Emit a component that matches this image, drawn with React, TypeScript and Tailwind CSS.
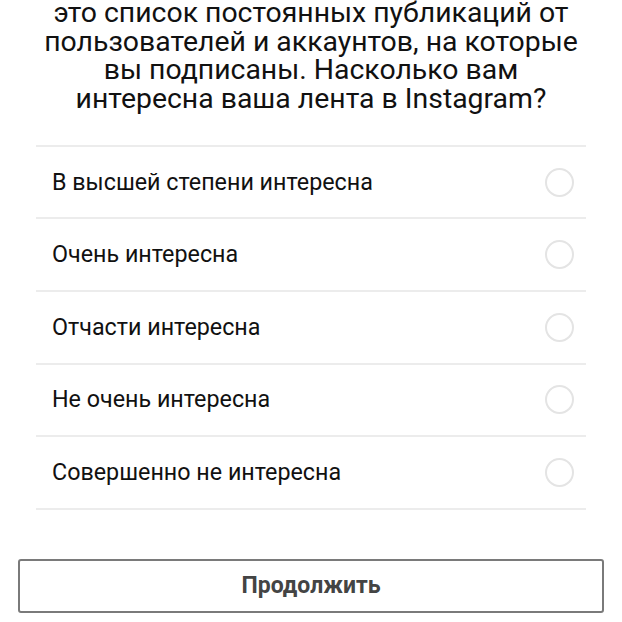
import React from 'react';

const options = [
  'В высшей степени интересна',
  'Очень интересна',
  'Отчасти интересна',
  'Не очень интересна',
  'Совершенно не интересна',
];

export default function App() {
  return (
    <div className="w-[622px] h-[622px] overflow-hidden bg-white font-['Roboto',sans-serif]">
      {/* Question */}
      <h2 className="mt-[-1px] px-[42px] text-center text-[28.4px] leading-[28.7px] text-[#111]">
        это список постоянных публикаций от пользователей и аккаунтов, на которые вы подписаны.
        Насколько вам интересна ваша лента в Instagram?
      </h2>

      {/* Options */}
      <div className="mx-[36px] mt-[31px] border-t-2 border-[#ececec]">
        {options.map((label) => (
          <div
            key={label}
            className="flex h-[72.6px] items-center justify-between border-b-2 border-[#ececec] pl-[16px] pr-[12px]"
          >
            <span className="text-[23.3px] text-[#111]">{label}</span>
            <span className="h-[29px] w-[29px] rounded-full border-2 border-[#e4e4e4]" />
          </div>
        ))}
      </div>

      {/* Footer */}
      <div className="px-[18px] pt-[49px]">
        <button className="flex h-[54px] w-full items-center justify-center rounded-[3px] border-2 border-[#7a7a7a] bg-white text-[23px] font-bold text-[#444]">
          Продолжить
        </button>
      </div>
    </div>
  );
}
